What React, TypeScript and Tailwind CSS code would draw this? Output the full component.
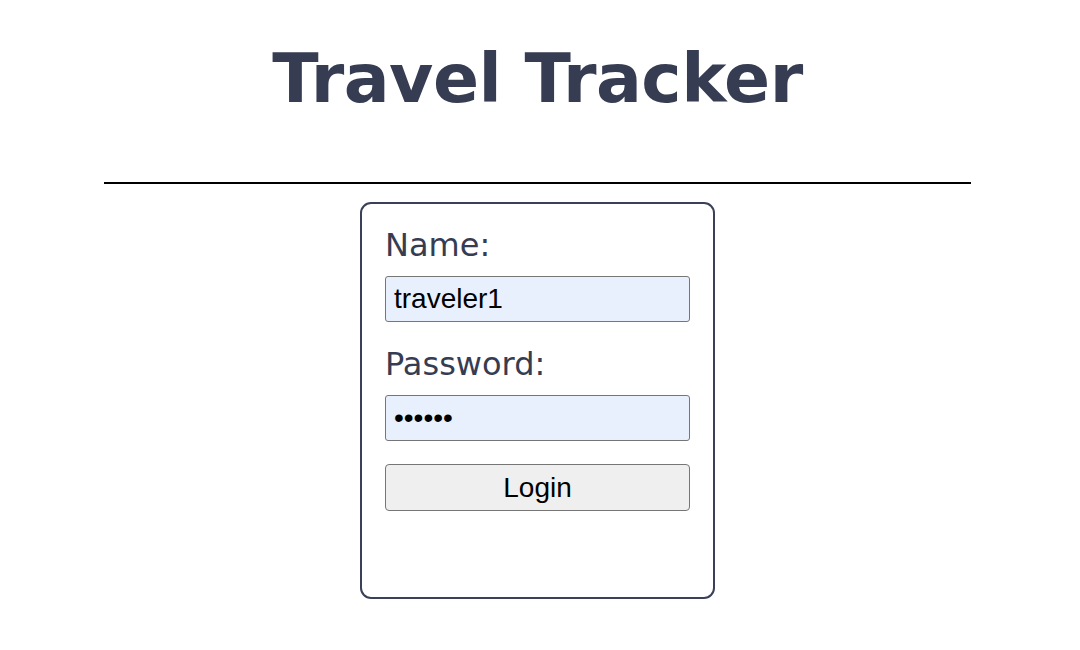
import React from 'react';

const LABEL = "block text-[32px] leading-[1.164] text-[#363c52] font-['DejaVu_Sans',sans-serif]";
const FIELD = "block w-full h-[46px] bg-[#e8f0fe] border border-[#767676] rounded-[3px] pl-[8px] text-[28px] text-black font-['Liberation_Sans',Arial,sans-serif] outline-none";

export default function App() {
    return (
        <div className="h-[650px] w-full bg-white pt-[45px] pr-[5px] overflow-hidden">
            <h1 className="text-center text-[68px] leading-none font-bold tracking-[-0.5px] text-[#363c52] font-['DejaVu_Sans',sans-serif]">
                Travel Tracker
            </h1>
            <div className="mt-[69px] mx-auto w-[867px] h-[2px] bg-black" />
            <div className="mt-[18px] mx-auto w-[355px] h-[397px] border-2 border-[#3a4058] rounded-[11px] px-[23px] pt-[23px]">
                <label className={LABEL}>Name:</label>
                <input className={`${FIELD} mt-[12px]`} defaultValue="traveler1" readOnly />
                <label className={`${LABEL} mt-[24px]`}>Password:</label>
                <input type="password" className={`${FIELD} mt-[12px]`} defaultValue="secret" readOnly />
                <button className="mt-[23px] block w-full h-[47px] bg-[#efefef] border border-[#767676] rounded-[4px] text-[28px] text-black font-['Liberation_Sans',Arial,sans-serif]">
                    Login
                </button>
            </div>
        </div>
    );
}
